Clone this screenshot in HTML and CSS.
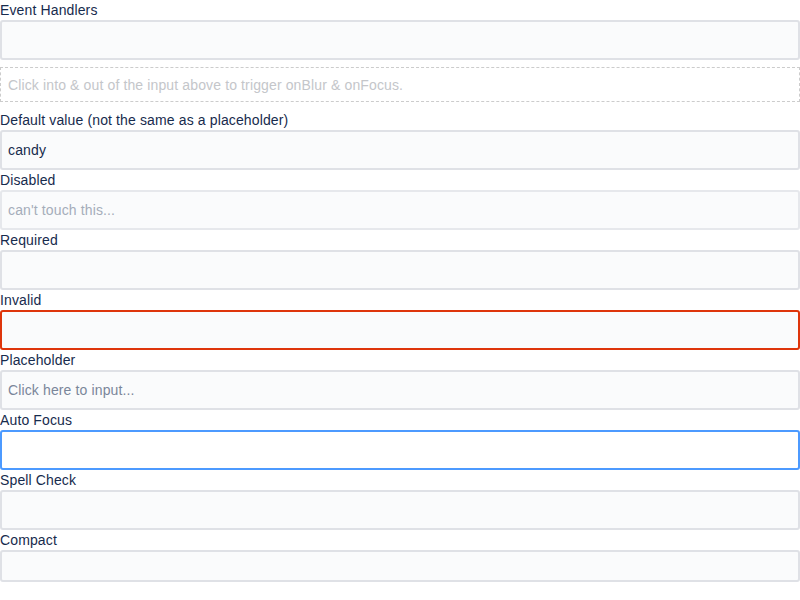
FILE: index.html
```html
<!DOCTYPE html>
<html>
<head>
<meta charset="utf-8">
<link rel="stylesheet" href="styles.css">
</head>
<body>
<div class="form">
  <div class="field">
    <label class="label">Event Handlers</label>
    <input class="input" type="text">
  </div>
  <div class="note">Click into &amp; out of the input above to trigger onBlur &amp; onFocus.</div>
  <div class="field">
    <label class="label">Default value (not the same as a placeholder)</label>
    <input class="input" type="text" value="candy">
  </div>
  <div class="field">
    <label class="label">Disabled</label>
    <input class="input" type="text" placeholder="can't touch this..." disabled>
  </div>
  <div class="field">
    <label class="label">Required</label>
    <input class="input" type="text">
  </div>
  <div class="field">
    <label class="label">Invalid</label>
    <input class="input input-invalid" type="text">
  </div>
  <div class="field">
    <label class="label">Placeholder</label>
    <input class="input" type="text" placeholder="Click here to input...">
  </div>
  <div class="field">
    <label class="label">Auto Focus</label>
    <input class="input input-focus" type="text">
  </div>
  <div class="field">
    <label class="label">Spell Check</label>
    <input class="input" type="text">
  </div>
  <div class="field">
    <label class="label">Compact</label>
    <input class="input input-compact" type="text">
  </div>
</div>
</body>
</html>
```
FILE: styles.css
```css
html, body {
  margin: 0;
  padding: 0;
  background: #ffffff;
}
body {
  font-family: "Liberation Sans", Arial, sans-serif;
  font-size: 14px;
  letter-spacing: 0.13px;
  color: #172b4d;
}
.form {
  display: flex;
  flex-direction: column;
}
.field {
  display: flex;
  flex-direction: column;
}
.label {
  display: block;
  height: 20px;
  line-height: 20px;
  font-size: 14px;
  color: #172b4d;
}
.input {
  box-sizing: border-box;
  width: 100%;
  height: 40px;
  margin: 0;
  padding: 0 6px;
  border: 2px solid #dfe1e6;
  border-radius: 3px;
  background: #fafbfc;
  font-family: "Liberation Sans", Arial, sans-serif;
  font-size: 14px;
  letter-spacing: 0.13px;
  color: #172b4d;
  outline: none;
}
.input::placeholder {
  color: #7a869a;
}
.input:disabled {
  background: #fafbfc;
  border-color: #e6e8ec;
}
.input:disabled::placeholder {
  color: #a5adba;
}
.input-invalid {
  border-color: #de350b;
}
.input-focus {
  border-color: #4c9aff;
  background: #ffffff;
}
.input-compact {
  height: 32px;
}
.note {
  box-sizing: border-box;
  height: 35px;
  margin: 7px 0 8px;
  padding: 0 7px;
  border: 1px dashed #cccccc;
  line-height: 34px;
  color: #c4c6ca;
  font-size: 14px;
}
```
